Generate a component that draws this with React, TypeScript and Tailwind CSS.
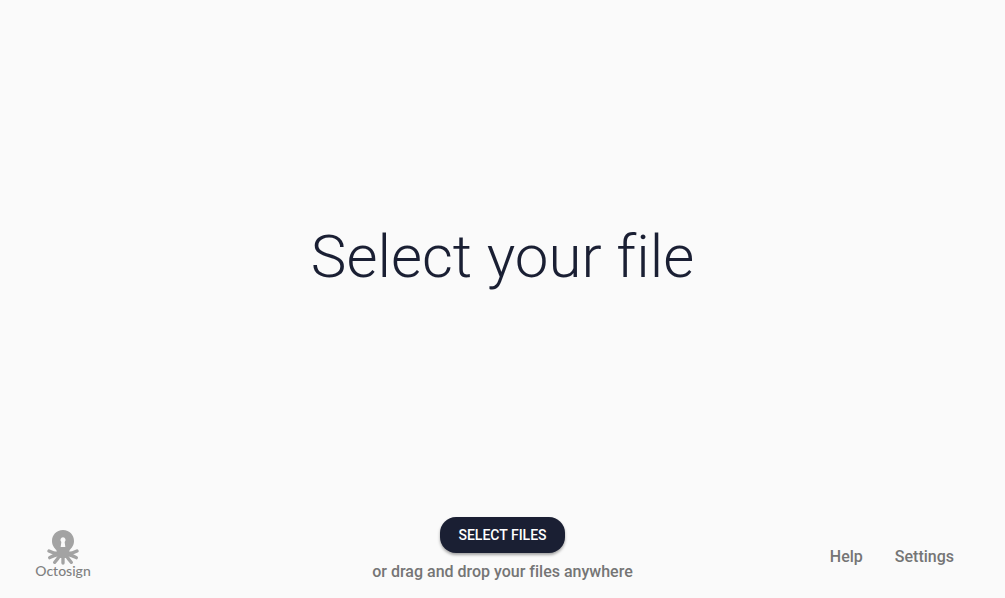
function OctopusIcon() {
  return (
    <svg viewBox="20 10 96 105" className="h-[35px] w-8" fill="none" aria-hidden="true">
      <g stroke="#a3a3a3" strokeWidth="10" strokeLinecap="round">
        <path d="M56 80 C44 82 36 78 26 73" />
        <path d="M58 82 C48 84 38 87 28 93" />
        <path d="M60 84 C54 94 50 100 43 107" />
        <path d="M68 84 V109" />
        <path d="M76 84 C82 94 86 100 93 107" />
        <path d="M78 82 C88 84 98 87 108 93" />
        <path d="M80 80 C92 82 100 78 110 73" />
      </g>
      <path
        fill="#a3a3a3"
        d="M68 10 C48 10 35 25 35 43 C35 56 42 64 48 70 C50 75 48 80 52 87 L60 94 H76 L84 87 C88 80 86 75 88 70 C94 64 101 56 101 43 C101 25 88 10 68 10 Z"
      />
      <path fill="#fafafa" d="M68 32 A8 8 0 0 0 63 46 L61 61 H75 L73 46 A8 8 0 0 0 68 32 Z" />
    </svg>
  );
}

export default function App() {
  return (
    <main className="flex min-h-screen flex-col bg-[#fafafa] font-['Roboto',sans-serif] text-[#1a1f33] [font-variant-ligatures:none]">
      <section className="flex flex-1 items-center justify-center">
        <h1 className="text-6xl font-light">Select your file</h1>
      </section>
      <footer className="grid grid-cols-[1fr_auto_1fr] items-center px-8 pt-1 pb-4">
        <div className="flex w-[62px] flex-col items-center pt-2 text-[#808080]">
          <OctopusIcon />
          <span className="font-['Lato',sans-serif] text-sm leading-3 font-medium">Octosign</span>
        </div>
        <div className="flex flex-col items-center gap-2">
          <button
            type="button"
            className="mb-px h-9 rounded-2xl bg-[#1a1f33] px-[18px] text-sm font-medium text-white uppercase shadow-[0_2px_3px_rgba(0,0,0,0.35)]"
          >
            Select files
          </button>
          <p className="text-base leading-5 font-medium whitespace-nowrap text-[#757575]">
            or drag and drop your files anywhere
          </p>
        </div>
        <nav className="flex justify-end gap-8 pt-3.5 pr-[19px] text-base leading-5 font-medium text-[#757575]">
          <a href="#help">Help</a>
          <a href="#settings">Settings</a>
        </nav>
      </footer>
    </main>
  );
}
